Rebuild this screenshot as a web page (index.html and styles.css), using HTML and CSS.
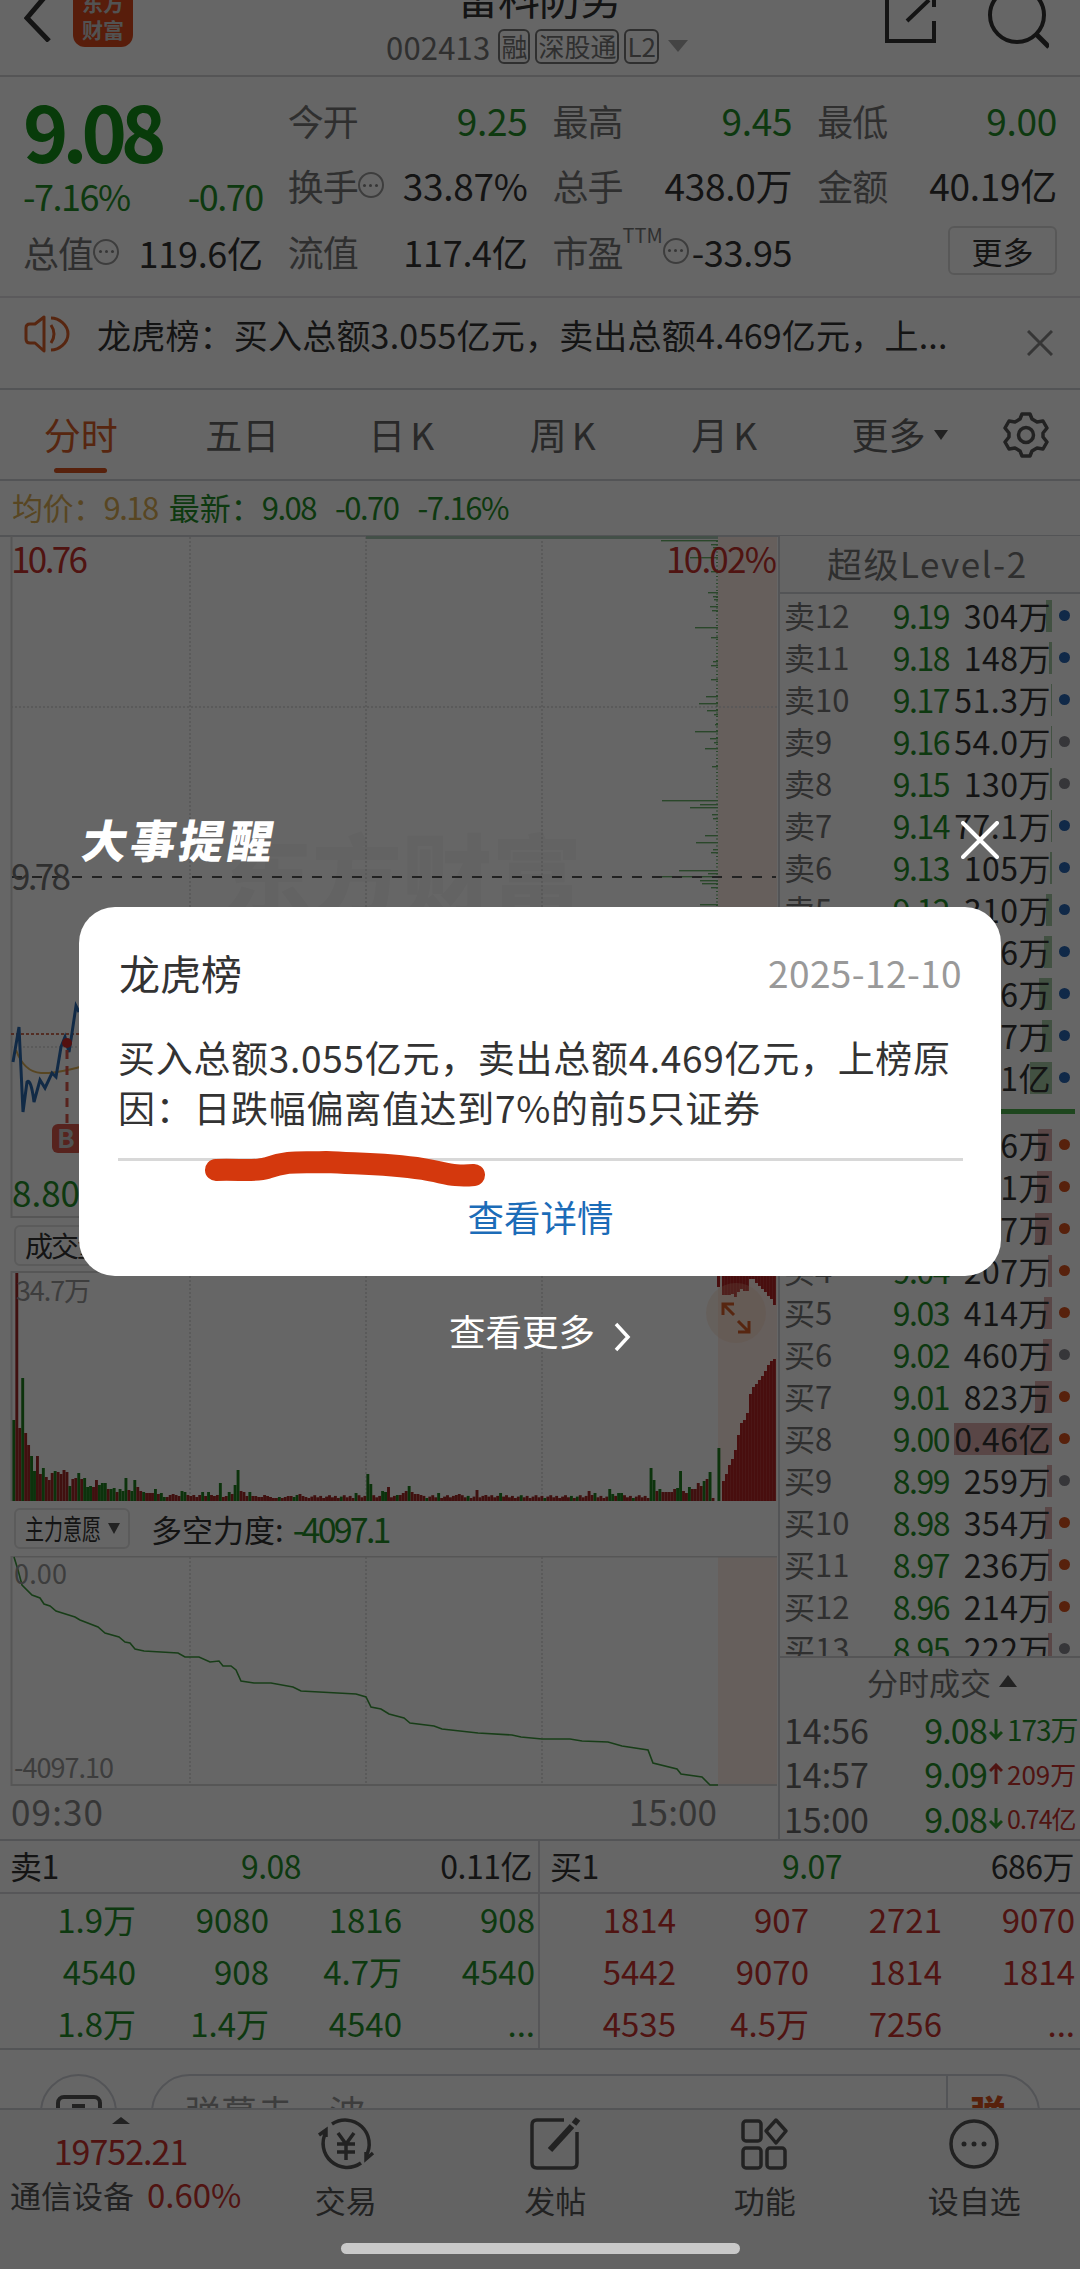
FILE: index.html
```html
<!DOCTYPE html>
<html lang="zh-CN">
<head>
  <meta charset="UTF-8" />
  <title>002413 分时</title>
  <meta name="viewport" content="width=device-width, initial-scale=1.0"/>
  <link rel="stylesheet" href="styles.css">
</head>
<body>

<div class="page">
  <header class="header">
    <svg class="back" width="28" height="84" viewBox="0 0 28 84"><path d="M25 34L3 60l22 23" fill="none" stroke="#333" stroke-width="5"/></svg>
    <div class="logo"><span>东方</span><span>财富</span></div>
    <div class="title">
      <h1>雷科防务</h1>
      <div class="code">
        <span class="num">002413</span>
        <span class="tag">融</span><span class="tag">深股通</span><span class="tag">L2</span>
        <svg width="20" height="12" viewBox="0 0 20 12"><path d="M0 0h20L10 12z" fill="#aaa"/></svg>
      </div>
    </div>
    <svg class="head-icons" width="170" height="60" viewBox="0 0 170 60" fill="none" stroke="#333" stroke-width="4">
      <path d="M8 0v41h47V21M50 0L28 21"/>
      <path d="M55 0v7"/>
      <circle cx="138" cy="15" r="27"/>
      <path d="M157 34l13 13" stroke-width="5"/>
    </svg>
  </header>

  <section class="stats">
    <div class="stat-price">
      <div class="price">9.08</div>
      <div class="cell green change"><b>-7.16%</b><b>-0.70</b></div>
      <div class="cell"><span>总值<i class="more-dot"></i></span><b>119.6亿</b></div>
    </div>
    <div class="stat-col">
      <div class="cell"><span>今开</span><b class="green">9.25</b></div>
      <div class="cell"><span>换手<i class="more-dot"></i></span><b>33.87%</b></div>
      <div class="cell"><span>流值</span><b>117.4亿</b></div>
    </div>
    <div class="stat-col">
      <div class="cell"><span>最高</span><b class="green">9.45</b></div>
      <div class="cell"><span>总手</span><b>438.0万</b></div>
      <div class="cell small"><span>市盈<sup>TTM</sup><i class="more-dot"></i></span><b>-33.95</b></div>
    </div>
    <div class="stat-col">
      <div class="cell"><span>最低</span><b class="green">9.00</b></div>
      <div class="cell"><span>金额</span><b>40.19亿</b></div>
      <div class="cell end"><button class="btn-more">更多</button></div>
    </div>
  </section>

  <section class="news">
    <svg width="48" height="40" viewBox="0 0 48 40" fill="none" stroke="#d9602a" stroke-width="3">
      <path d="M20 3v34l-9-8H6q-4 0-4-4V14q0-4 4-4h5z" stroke-linejoin="round"/>
      <path d="M27 11q6 9 0 18M27 4c8 0 17 7 17 16s-9 16-17 16" />
    </svg>
    <p>龙虎榜：买入总额3.055亿元，卖出总额4.469亿元，上...</p>
    <svg class="news-x" width="26" height="26" viewBox="0 0 26 26" stroke="#888" stroke-width="3"><path d="M1 1l24 24M25 1L1 25"/></svg>
  </section>

  <nav class="tabs">
    <span class="tab active">分时</span>
    <span class="tab">五日</span>
    <span class="tab k">日K</span>
    <span class="tab k">周K</span>
    <span class="tab k">月K</span>
    <span class="tab wide">更多<svg width="14" height="10" viewBox="0 0 14 10"><path d="M0 0h14L7 10z" fill="#555"/></svg></span>
    <svg class="gear" width="48" height="48" viewBox="0 0 48 48" fill="none" stroke="#555" stroke-width="3.5" stroke-linejoin="round">
      <path d="M20 3h8l2 5 5 3 6-1 4 7-4 5v4l4 5-4 7-6-1-5 3-2 5h-8l-2-5-5-3-6 1-4-7 4-5v-4l-4-5 4-7 6 1 5-3z"/>
      <circle cx="24" cy="24" r="7.5"/>
    </svg>
  </nav>

  <div class="latest">
    <span class="avg">均价：<b>9.18</b></span>
    <span class="now">最新：<b>9.08</b></span>
    <b>-0.70</b>
    <b>-7.16%</b>
  </div>

  <main class="main">
    <div class="charts">
      <svg class="chart" width="778" height="686" viewBox="0 536 778 686">
        <text class="watermark" x="222" y="910">东方财富</text>
        <rect x="718" y="537" width="59" height="680" fill="#ffede6"/>
        <path class="frame" d="M11.5 536v681H777"/>
        <path class="grid" d="M190 537V1217M366 537V1217M542 537V1217M11 707H777M11 1047H777"/>
        <path d="M366 537.500H718" stroke="#a9c9b3" stroke-width="3"/>
        <g id="chips" fill="#69b269"></g>
        <path d="M12 877H776" stroke="#555" stroke-width="2" stroke-dasharray="10 10"/>
        <path d="M11 1034H777" stroke="#d07058" stroke-width="2" stroke-dasharray="3 2"/>
        <path d="M16 1050Q24 1072 41 1073T90 1064" fill="none" stroke="#dcae55" stroke-width="2"/>
        <path d="M13 1062l6-35 4 85 4-30q4-4 7 20l6-22 5 8 7-15 4 4 5-30 4-10 4 15 3-19 4-27 3 6" fill="none" stroke="#2b69b0" stroke-width="3"/>
        <path d="M67 1050v74" stroke="#d9574b" stroke-width="3" stroke-dasharray="9 7"/>
        <circle cx="67" cy="1043" r="5" fill="#d02a2a"/>
        <rect x="52" y="1124" width="32" height="29" rx="6" fill="#d9574b"/>
        <text x="57" y="1148" font-size="26" font-weight="700" fill="#ccc">B</text>
        <text x="11" y="573" class="red" font-size="35" textLength="77">10.76</text>
        <text x="666" y="573" class="red" font-size="35" textLength="111">10.02%</text>
        <text x="11" y="890" fill="#777" font-size="35" textLength="60">9.78</text>
        <text x="12" y="1207" class="green" font-size="35" textLength="68">8.80</text>
      </svg>

      <div class="indicator"><span class="pick"><span class="pick-vol">成交量</span></span></div>

      <svg class="chart" width="778" height="232" viewBox="0 1271 778 232">
        <rect x="718" y="1272" width="59" height="229" fill="#ffede6"/>
        <path class="frame" d="M777 1272H11.500V1501"/>
        <path class="grid" d="M190 1272V1501M366 1272V1501M542 1272V1501"/>
        <g id="volume"></g>
        <circle cx="736" cy="1313" r="30" fill="#f7c9a8" opacity=".28"/>
        <path d="M723 1315V1304H734M723 1304L734 1315M749 1321V1332H738M749 1332L738 1321" fill="none" stroke="#d9602a" stroke-width="3"/>
        <text x="16" y="1301" fill="#999" font-size="27" textLength="75">34.7万</text>
      </svg>

      <div class="indicator">
        <span class="pick"><span class="pick-main">主力意愿</span><svg width="12" height="11" viewBox="0 0 12 11"><path d="M0 0h12L6 11z" fill="#555"/></svg></span>
        <span class="force">多空力度:</span><span class="force-num">-4097.1</span>
      </div>

      <svg class="chart" width="778" height="284" viewBox="0 1556 778 284">
        <rect x="718" y="1557" width="59" height="228" fill="#ffede6"/>
        <path class="frame" d="M777 1556.500H11.500V1785H777"/>
        <path class="grid" d="M190 1557V1785M366 1557V1785M542 1557V1785"/>
        <polyline fill="none" stroke="#3c9a3c" stroke-width="1.600" points="14,1557 18,1570 22,1585 32,1595 40,1598 44,1604 50,1606 56,1611 75,1617 80,1620 98,1627 105,1633 119,1637 125,1642 130,1643 135,1649 144,1651 178,1653 185,1657 199,1657 210,1662 219,1661 223,1666 231,1666 236,1670 241,1681 254,1683 271,1683 293,1687 301,1691 356,1694 366,1697 371,1707 381,1709 389,1714 404,1718 410,1723 434,1726 442,1729 478,1733 512,1735 521,1737 542,1739 570,1739 582,1741 608,1742 622,1746 648,1750 653,1763 677,1769 681,1774 702,1777 710,1785 718,1785"/>
        <text x="14" y="1584" fill="#999" font-size="27" textLength="53">0.00</text>
        <text x="14" y="1778" fill="#999" font-size="27" textLength="100">-4097.10</text>
        <text x="11" y="1826" fill="#888" font-size="35" textLength="92">09:30</text>
        <text x="629" y="1826" fill="#888" font-size="35" textLength="88">15:00</text>
      </svg>
    </div>

    <aside class="depth">
      <div class="depth-head">超级Level-2</div>
      <div class="book">
        <div class="rows" id="sells"></div>
        <div class="book-line"></div>
        <div class="rows" id="buys"></div>
      </div>
      <div class="deals-head">分时成交<svg width="18" height="12" viewBox="0 0 18 12"><path d="M0 12h18L9 0z" fill="#555"/></svg></div>
      <div class="deal"><span>14:56</span><b>9.08</b><svg class="down" viewBox="0 0 14 22"><path d="M7 1v19M1 14l6 6 6-6"/></svg><em class="green">173万</em></div>
      <div class="deal"><span>14:57</span><b>9.09</b><svg class="up" viewBox="0 0 14 22"><path d="M7 21V2M1 8l6-6 6 6"/></svg><em class="red mid">209万</em></div>
      <div class="deal"><span>15:00</span><b>9.08</b><svg class="down" viewBox="0 0 14 22"><path d="M7 1v19M1 14l6 6 6-6"/></svg><em class="red min">0.74亿</em></div>
    </aside>
  </main>

  <section class="queue">
    <div class="side">
      <div class="side-head"><span>卖1</span><span class="green">9.08</span><span>0.11亿</span></div>
      <div class="orders green">
        <span>1.9万</span><span>9080</span><span>1816</span><span>908</span>
        <span>4540</span><span>908</span><span>4.7万</span><span>4540</span>
        <span>1.8万</span><span>1.4万</span><span>4540</span><span>...</span>
      </div>
    </div>
    <div class="side">
      <div class="side-head"><span>买1</span><span class="green">9.07</span><span>686万</span></div>
      <div class="orders red">
        <span>1814</span><span>907</span><span>2721</span><span>9070</span>
        <span>5442</span><span>9070</span><span>1814</span><span>1814</span>
        <span>4535</span><span>4.5万</span><span>7256</span><span>...</span>
      </div>
    </div>
  </section>

  <section class="danmu">
    <div class="round">
      <svg width="46" height="40" viewBox="0 0 46 40" fill="none" stroke="#555" stroke-width="4"><rect x="2" y="2" width="42" height="34" rx="6"/><path d="M16 11h13"/></svg>
    </div>
    <div class="pill"><span>弹幕走一波</span><b>弹</b></div>
  </section>

  <footer class="bottom">
    <div class="index">
      <svg width="18" height="7" viewBox="0 0 18 7"><path d="M0 7h18L9 0z" fill="#555"/></svg>
      <div class="index-num">19752.21</div>
      <div class="index-name">通信设备<b>0.60%</b></div>
    </div>
    <div class="nav-item">
      <svg width="58" height="54" viewBox="0 0 58 54">
        <path d="M15 7A24 24 0 0 1 49 39M44 46A24 24 0 0 1 9 15M2 18l7-5v7M56 36l-7 6v-7"/>
        <path d="M21 16l8 11 8-11M29 27v16M20 27h18M20 35h18"/>
      </svg>
      <span>交易</span>
    </div>
    <div class="nav-item">
      <svg width="58" height="54" viewBox="0 0 58 54">
        <path d="M38 3H11q-5 0-5 5v38q0 5 5 5h35q5 0 5-5V15"/>
        <path d="M46 9L24 33" stroke-width="6"/><path d="M48 7l4-5" stroke-width="6"/>
      </svg>
      <span>发帖</span>
    </div>
    <div class="nav-item">
      <svg width="58" height="54" viewBox="0 0 58 54">
        <rect x="7" y="4" width="18" height="20" rx="3"/><rect x="7" y="31" width="18" height="20" rx="3"/><rect x="31" y="31" width="18" height="20" rx="3"/>
        <path d="M40 3l10 11-10 12-10-12z" stroke-linejoin="round"/>
      </svg>
      <span>功能</span>
    </div>
    <div class="nav-item">
      <svg width="58" height="54" viewBox="0 0 58 54">
        <circle cx="29" cy="27" r="23"/>
        <g fill="#555" stroke="none"><circle cx="19" cy="27" r="2.500"/><circle cx="29" cy="27" r="2.500"/><circle cx="39" cy="27" r="2.500"/></g>
      </svg>
      <span>设自选</span>
    </div>
  </footer>
</div>

<div class="mask">
  <div class="remind">
    <div class="remind-top">
      <h2>大事提醒</h2>
      <svg width="38" height="38" viewBox="0 0 38 38" stroke="#fff" stroke-width="4" stroke-linecap="round"><path d="M2 2l34 34M36 2L2 36"/></svg>
    </div>
    <div class="card">
      <div class="card-head"><h3>龙虎榜</h3><time>2025-12-10</time></div>
      <p>买入总额3.055亿元，卖出总额4.469亿元，上榜原<br>因：日跌幅偏离值达到7%的前5只证券</p>
      <a class="detail">查看详情</a>
      <svg class="stroke" width="290" height="44" viewBox="0 0 290 44"><path d="M15 24C38 23 54 26 66 22C88 14 100 17 125 16C160 18 185 17 222 23C246 27 252 31 273 29" fill="none" stroke="#d4380d" stroke-width="22" stroke-linecap="round" stroke-linejoin="round"/></svg>
    </div>
    <a class="see-more">查看更多<svg width="18" height="30" viewBox="0 0 18 30"><path d="M3 2l12 13L3 28" fill="none" stroke="#fff" stroke-width="3.500"/></svg></a>
  </div>
  <div class="home-bar"></div>
</div>

<script src="script.js"></script>
</body>
</html>
```
FILE: styles.css
```css
* {
  box-sizing: border-box;
}

body {
  margin: 0;
  width: 1080px;
  height: 2269px;
  overflow: hidden;
  background-color: #fff;
  color: #333;
  font-family: "Noto Sans CJK SC", sans-serif;
  font-size: 34px;
}

svg {
  display: block;
  flex: none;
}

h1, h2, h3, p {
  margin: 0;
  font-weight: 400;
}

b, em, i {
  font-weight: 400;
  font-style: normal;
}

.green {
  color: #25902a;
  fill: #25902a;
}

.red {
  color: #c8322d;
  fill: #c8322d;
}

.page {
  width: 1080px;
  height: 2269px;
  display: flex;
  flex-direction: column;
  overflow: hidden;
}

/* header */
.header {
  flex: none;
  height: 77px;
  display: flex;
  align-items: flex-start;
  padding-left: 24px;
  border-bottom: 2px solid #d5d5d8;
}

.back {
  margin-top: -42px;
}

.logo {
  margin: -11px 0 0 21px;
  width: 60px;
  height: 58px;
  border-radius: 12px;
  background-color: #dc4a1d;
  color: #ccc;
  font-size: 21px;
  font-weight: 700;
  line-height: 27px;
  display: flex;
  flex-direction: column;
  align-items: center;
}

.title {
  width: 494px;
  margin-left: 157px;
  display: flex;
  flex-direction: column;
  align-items: center;
}

.title h1 {
  margin-top: -31px;
  height: 58px;
  font-size: 42px;
  line-height: 56px;
  letter-spacing: -1px;
  width: 240px;
  padding-left: 40px;
  white-space: nowrap;
}

.code {
  display: flex;
  align-items: center;
  height: 38px;
  gap: 5px;
  color: #777;
  font-size: 31px;
}

.num {
  margin-right: 3px;
  letter-spacing: 0.2px;
}

.tag {
  height: 35px;
  padding: 0 1px;
  border: 2px solid #777;
  border-radius: 6px;
  font-size: 26px;
  line-height: 30px;
}

.code svg {
  margin-left: 4px;
}

.head-icons {
  margin-left: auto;
  margin-right: 31px;
}

/* quote figures */
.stats {
  flex: none;
  height: 221px;
  padding: 10px 23px 0 23px;
  display: flex;
  gap: 25px;
  border-bottom: 2px solid #e4e1e6;
}

.stat-col, .stat-price {
  width: 240px;
}

.cell {
  height: 65.500px;
  display: flex;
  align-items: center;
  justify-content: space-between;
  font-size: 36px;
  letter-spacing: -1px;
  white-space: nowrap;
}

.cell span {
  color: #777;
  display: flex;
  align-items: center;
}

.cell b {
  font-size: 37px;
  letter-spacing: -0.3px;
}

.stat-price .change {
  height: 44px;
  margin-top: 9px;
}

.change b {
  font-size: 36px;
  letter-spacing: -1.5px;
}

.stat-price .cell:last-child {
  margin-top: 2px;
}

.cell:last-child b {
  font-size: 36px;
}

.price {
  height: 77px;
  font-size: 77px;
  line-height: 86px;
  font-weight: 700;
  letter-spacing: -6px;
  color: #149419;
}

.cell sup {
  align-self: flex-start;
  font-size: 20px;
  line-height: 20px;
  letter-spacing: 0;
}

.small b {
  font-size: 34px;
}

.end {
  justify-content: flex-end;
}

.more-dot {
  width: 26px;
  height: 26px;
  border: 2px solid #999;
  border-radius: 50%;
  display: flex;
  align-items: center;
  justify-content: center;
}

.more-dot::before {
  content: "";
  width: 3px;
  height: 3px;
  border-radius: 50%;
  background-color: #888;
  box-shadow: -6px 0 #888, 6px 0 #888;
}

.btn-more {
  width: 109px;
  height: 49px;
  border: 2px solid #ddd;
  border-radius: 6px;
  background: none;
  color: #333;
  font-family: inherit;
  font-size: 31px;
  line-height: 40px;
}

/* news strip */
.news {
  flex: none;
  height: 92px;
  display: flex;
  align-items: flex-start;
  padding: 16px 27px 0 24px;
  border-bottom: 2px solid #d0d3d6;
}

.news p {
  margin-left: 25px;
  line-height: 42px;
  font-size: 34px;
  letter-spacing: 0.2px;
  white-space: nowrap;
}

.news-x {
  margin: 16px 0 0 auto;
}

/* chart tabs */
.tabs {
  flex: none;
  height: 91px;
  display: flex;
  align-items: center;
  color: #666;
  font-size: 37px;
  border-bottom: 2px solid #d0d3d6;
}

.tab {
  position: relative;
  width: 161.500px;
  line-height: 85px;
  text-align: center;
}

.tab.k {
  letter-spacing: 5px;
}

.tab.wide {
  display: flex;
  align-items: center;
  gap: 8px;
  width: 163px;
  padding-left: 44px;
  white-space: nowrap;
}

.active {
  color: #d9602a;
}

.active::after {
  content: "";
  position: absolute;
  left: 54px;
  bottom: 4px;
  width: 53px;
  height: 5px;
  border-radius: 3px;
  background-color: #d9541e;
}

.gear {
  margin-left: 31px;
}

.latest {
  flex: none;
  height: 56px;
  padding-left: 12px;
  display: flex;
  gap: 19px;
  font-size: 31px;
  line-height: 52px;
  color: #25902a;
  border-bottom: 2px solid #d0d3d6;
}

.latest b {
  letter-spacing: -1.5px;
}

.latest .avg {
  color: #dcae55;
  letter-spacing: -0.5px;
}

.now {
  margin-left: -8px;
}

/* charts */
.main {
  flex: none;
  height: 1305px;
  display: flex;
  margin-top: -1px;
  border-bottom: 2px solid #d0d3d6;
}

.charts {
  width: 778px;
}

.watermark {
  font-size: 90px;
  font-weight: 900;
  fill: #f7f7f7;
}

.frame {
  fill: none;
  stroke: #d8d8d8;
  stroke-width: 2;
}

.grid {
  stroke: #d8d8d8;
  stroke-width: 1.500;
  stroke-dasharray: 2 2;
}

.indicator {
  display: flex;
  align-items: center;
  height: 49px;
  padding: 0 0 3px 14px;
}

.charts .indicator:nth-of-type(2) {
  height: 53px;
}

.pick {
  width: 116px;
  height: 41px;
  padding-left: 9px;
  border: 2px solid #e4e4e4;
  border-radius: 6px;
  display: flex;
  align-items: center;
}

.pick svg {
  margin-left: -17px;
}

.pick-vol {
  font-size: 28px;
  letter-spacing: -2px;
  white-space: nowrap;
}

.pick-main {
  flex: none;
  width: 100px;
  font-size: 28px;
  line-height: 36px;
  transform: scaleX(0.68);
  transform-origin: left;
  white-space: nowrap;
}

.force {
  margin-left: 21px;
  font-size: 31px;
}

.force-num {
  margin-left: 9px;
  color: #25902a;
  letter-spacing: -2.800px;
}

/* order book */
.depth {
  width: 302px;
  border-left: 2px solid #d0d3d6;
}

.depth-head {
  height: 58px;
  background-color: #fafafa;
  border-bottom: 2px solid #d0d3d6;
  padding-left: 47px;
  color: #777;
  font-size: 35px;
  line-height: 54px;
  letter-spacing: 1.500px;
  white-space: nowrap;
}

.book {
  height: 1064px;
  padding-top: 1px;
  overflow: hidden;
  border-bottom: 2px solid #d5d5d8;
}

.book-line {
  height: 5px;
  margin: 10px 5px 10px 4px;
  background-color: #4db04d;
}

.row {
  display: grid;
  grid-template-columns: 70px 95px 103px;
  align-items: center;
  height: 42px;
  padding-left: 4px;
  font-size: 32px;
  line-height: 40px;
  text-align: right;
  white-space: nowrap;
}

.row .name {
  height: 42px;
  color: #777;
  font-size: 31px;
  text-align: left;
}

.row .cost {
  height: 42px;
  color: #25902a;
  letter-spacing: -1.500px;
}

.row .qty {
  position: relative;
  height: 42px;
  letter-spacing: 0.500px;
}

.qty::after {
  content: "";
  position: absolute;
  right: -18px;
  top: 15px;
  width: 11px;
  height: 11px;
  border-radius: 50%;
  background-color: #888890;
}

.qty.blue::after {
  background-color: #2a66b4;
}

.qty.orange::after {
  background-color: #d9541e;
}

.bar {
  position: absolute;
  right: 0;
  top: 5px;
  height: 32px;
  background-color: #a5cba5;
}

.bar.buy {
  background-color: #dfb0b0;
}

.qty span {
  position: relative;
  padding-right: 1px;
}

.deals-head {
  height: 46px;
  margin-bottom: 3px;
  padding-left: 87px;
  display: flex;
  align-items: center;
  gap: 8px;
  color: #777;
  font-size: 31px;
}

.deal {
  height: 44.500px;
  padding-left: 4px;
  display: grid;
  grid-template-columns: 100px 103px 20px 70px;
  align-items: center;
  line-height: 43px;
  color: #666;
}

.deal b {
  text-align: right;
  letter-spacing: -0.800px;
  color: #25902a;
}

.deal svg {
  width: 14px;
  height: 22px;
  margin-left: 2px;
  fill: none;
  stroke-width: 3;
}

.down {
  stroke: #30a030;
}

.up {
  stroke: #c8322d;
}

.deal em {
  font-size: 28px;
  letter-spacing: -1px;
  white-space: nowrap;
}

.deal .mid {
  font-size: 26px;
  letter-spacing: 0;
}

.deal .min {
  font-size: 25px;
}

/* order queue */
.queue {
  flex: none;
  display: flex;
  height: 209px;
  border-bottom: 2px solid #d0d3d6;
}

.side {
  width: 541px;
  padding-top: 1px;
}

.side:first-child {
  border-right: 2px solid #d8d8dc;
}

.side-head {
  height: 52px;
  padding: 0 6px 0 10px;
  display: grid;
  grid-template-columns: 1fr 1fr 1fr;
  line-height: 47px;
  font-size: 32px;
  border-bottom: 2px solid #d8d8dc;
}

.side-head span {
  letter-spacing: -0.500px;
}

.side-head span:nth-child(2) {
  text-align: center;
}

.side-head span:last-child {
  text-align: right;
}

.orders {
  display: grid;
  grid-template-columns: repeat(4, 133px);
  padding-left: 3px;
  font-size: 33px;
  line-height: 52px;
  margin-top: -1px;
  text-align: right;
}

/* comment bar */
.danmu {
  flex: none;
  height: 58px;
  padding: 24px 0 0 40px;
  display: flex;
  align-items: flex-start;
  overflow: hidden;
}

.round {
  flex: none;
  width: 77px;
  height: 77px;
  padding: 19px 0 0 14px;
  border: 2px solid #d0d3da;
  border-radius: 50%;
}

.pill {
  width: 889px;
  height: 77px;
  margin-left: 34px;
  padding-left: 32px;
  display: flex;
  justify-content: space-between;
  border: 2px solid #d0d3da;
  border-radius: 39px;
  color: #999;
  font-size: 36px;
  line-height: 71px;
}

.pill b {
  width: 92px;
  padding-left: 22px;
  border-left: 2px solid #d0d3da;
  color: #d9541e;
  font-weight: 900;
}

/* bottom bar */
.bottom {
  flex: 1;
  display: flex;
  background-color: #f8f8f8;
  border-top: 2px solid #d0d3d6;
}

.index {
  width: 241px;
  padding-top: 7px;
  color: #555;
}

.index svg {
  margin-left: 112px;
}

.index-num {
  height: 50px;
  text-align: center;
  color: #c8322d;
  font-size: 34px;
  line-height: 54px;
  letter-spacing: -1px;
}

.index-name {
  padding-left: 10px;
  font-size: 31px;
  line-height: 40px;
  white-space: nowrap;
}

.index-name b {
  margin-left: 13px;
  font-size: 33px;
  color: #c8322d;
}

.nav-item {
  width: 209.500px;
  padding-top: 7px;
  display: flex;
  flex-direction: column;
  align-items: center;
  color: #555;
  font-size: 31px;
  line-height: 57px;
}

.nav-item svg {
  fill: none;
  stroke: #555;
  stroke-width: 3.500;
}

/* reminder dialog */
.mask {
  position: absolute;
  left: 0;
  top: 0;
  width: 1080px;
  height: 2269px;
  background-color: rgba(0, 0, 0, 0.6);
  display: flex;
  flex-direction: column;
  align-items: center;
}

.remind {
  width: 922px;
  padding-top: 815px;
}

.remind-top {
  height: 92px;
  padding: 6px 2px 0 0;
  display: flex;
  justify-content: space-between;
}

.remind-top h2 {
  margin-top: -4px;
  color: #fff;
  font-size: 45px;
  font-weight: 900;
  line-height: 44px;
  letter-spacing: 3.500px;
  transform: skewX(-10deg);
}

.card {
  position: relative;
  height: 369px;
  padding: 37px 38px 0 39px;
  border-radius: 36px;
  background-color: #fff;
}

.card-head {
  display: flex;
  justify-content: space-between;
  line-height: 56px;
  padding: 0 1px;
}

.card h3 {
  font-size: 41px;
}

.card time {
  color: #999;
  font-size: 37px;
  letter-spacing: 0.400px;
}

.card p {
  height: 124px;
  margin-top: 32px;
  font-size: 37px;
  line-height: 50px;
  letter-spacing: 0.700px;
  white-space: nowrap;
}

.detail {
  display: block;
  margin-top: 2px;
  border-top: 3px solid #d8d8d8;
  color: #1c6cb8;
  font-size: 36.500px;
  line-height: 112px;
  text-align: center;
}

.stroke {
  position: absolute;
  left: 122px;
  top: 239px;
}

.see-more {
  margin-top: 26px;
  display: flex;
  align-items: center;
  justify-content: center;
  gap: 18px;
  color: #fff;
  font-size: 36.500px;
  line-height: 58px;
}

.see-more svg {
  margin-top: 11px;
}

.home-bar {
  width: 399px;
  height: 11px;
  margin-top: auto;
  margin-bottom: 15px;
  border-radius: 6px;
  background-color: #c9c9c9;
}
```
FILE: script.js
```js
const NS = "http://www.w3.org/2000/svg";

function addRect(group, x, y, w, h, color) {
  const rect = document.createElementNS(NS, "rect");
  rect.setAttribute("x", x);
  rect.setAttribute("y", y);
  rect.setAttribute("width", w);
  rect.setAttribute("height", h);
  if (color) rect.setAttribute("fill", color);
  group.appendChild(rect);
}

// [name, price, quantity, bar width, dot]
const sells = [
  ["卖12", "9.19", "304万", 6, "blue"],
  ["卖11", "9.18", "148万", 3, "blue"],
  ["卖10", "9.17", "51.3万", 1, "blue"],
  ["卖9", "9.16", "54.0万", 1, ""],
  ["卖8", "9.15", "130万", 2, ""],
  ["卖7", "9.14", "77.1万", 1, "blue"],
  ["卖6", "9.13", "105万", 2, "blue"],
  ["卖5", "9.12", "310万", 6, "blue"],
  ["卖4", "9.11", "776万", 8, "blue"],
  ["卖3", "9.10", "636万", 13, "blue"],
  ["卖2", "9.09", "507万", 10, "blue"],
  ["卖1", "9.08", "0.11亿", 22, "blue"]
];

const buys = [
  ["买1", "9.07", "686万", 14, "orange"],
  ["买2", "9.06", "721万", 15, "orange"],
  ["买3", "9.05", "827万", 17, "orange"],
  ["买4", "9.04", "207万", 4, "orange"],
  ["买5", "9.03", "414万", 8, "orange"],
  ["买6", "9.02", "460万", 9, ""],
  ["买7", "9.01", "823万", 17, "orange"],
  ["买8", "9.00", "0.46亿", 98, "orange"],
  ["买9", "8.99", "259万", 5, ""],
  ["买10", "8.98", "354万", 7, "orange"],
  ["买11", "8.97", "236万", 4, "orange"],
  ["买12", "8.96", "214万", 4, "orange"],
  ["买13", "8.95", "222万", 4, ""]
];

function renderRows(id, rows, side) {
  document.getElementById(id).innerHTML = rows.map(([name, cost, qty, width, dot]) => `
    <div class="row">
      <span class="name">${name}</span>
      <span class="cost">${cost}</span>
      <span class="qty ${dot}"><i class="bar ${side}" style="width:${width}px"></i><span>${qty}</span></span>
    </div>`).join("");
}

renderRows("sells", sells, "sell");
renderRows("buys", buys, "buy");

// price distribution, [y, length], hanging off the close line
const chips = [
  [540, 57], [544, 7], [547, 5], [557, 28], [571, 7], [592, 10], [596, 5], [599, 4], [606, 8], [610, 6],
  [627, 23], [637, 7], [661, 5], [665, 7], [679, 7], [696, 12], [703, 19], [710, 11], [714, 4], [724, 3],
  [731, 23], [738, 8], [742, 4], [748, 13], [766, 6], [800, 56], [804, 18], [807, 28], [814, 6], [818, 5],
  [835, 13], [842, 22], [849, 5], [852, 7], [870, 39], [873, 10], [876, 58], [880, 18], [883, 16], [887, 7], [904, 18]
];
const chipGroup = document.getElementById("chips");
for (let y = 541; y < 907; y += 3.5) addRect(chipGroup, 716, y, 2, 1);
chips.forEach(([y, len]) => addRect(chipGroup, 718 - len, y, len, 1.4));

// minute volume, bar heights in px
const volume = [
  81, 228, 73, 123, 68, 56, 45, 30, 45, 27, 33, 24, 21, 28, 30, 29, 27, 31, 29, 15,
  22, 23, 28, 22, 23, 14, 15, 14, 21, 16, 18, 18, 12, 12, 13, 9, 12, 10, 23, 11,
  10, 21, 14, 10, 9, 8, 8, 8, 12, 7, 8, 4, 4, 6, 7, 6, 5, 10, 9, 6,
  5, 6, 4, 6, 9, 5, 9, 6, 5, 6, 18, 4, 5, 9, 7, 16, 31, 10, 9, 5,
  9, 5, 5, 4, 4, 6, 5, 4, 3, 3, 4, 3, 4, 5, 5, 4, 6, 7, 5, 4
];
while (volume.length < 240) volume.push(3 + (volume.length * 7 % 5) * 0.7);
const spikes = {
  116: 8, 120: 27, 121: 17, 125: 10, 126: 9, 127: 14, 130: 6, 131: 6, 132: 8, 133: 10, 134: 15, 135: 9, 136: 7, 137: 7, 138: 6,
  144: 8, 150: 6, 151: 7, 157: 11, 160: 6, 165: 8, 195: 10, 196: 6, 197: 8, 202: 12, 203: 7, 205: 8, 206: 8,
  216: 33, 217: 21, 218: 10, 219: 12, 220: 9, 221: 9, 222: 9, 223: 9, 224: 12, 225: 13, 226: 30, 227: 10, 228: 8,
  229: 14, 230: 12, 231: 12, 232: 18, 233: 15, 234: 20, 235: 22, 236: 29, 237: 3, 238: 0, 239: 53
};
Object.keys(spikes).forEach((i) => { volume[i] = spikes[i]; });
const greens = [
  0, 3, 6, 7, 10, 14, 19, 22, 24, 25, 26, 29, 30, 31, 33, 34, 36, 37, 38, 40, 41, 44, 48, 50, 51, 57, 58, 64, 66, 70,
  73, 75, 76, 80, 90, 95, 96, 111, 116, 120, 121, 125, 126, 130, 134, 140, 144, 154, 165, 172, 180, 189, 191,
  197, 202, 203, 205, 206, 210, 216, 217, 219, 225, 226, 229, 234, 236, 239
];

const volumeGroup = document.getElementById("volume");
volume.forEach((h, i) => {
  addRect(volumeGroup, 12.4 + i * 2.95, 1501 - h, 2.9, h, greens.includes(i) ? "#20801f" : "#a02a26");
});

// closing auction: matched volume below, unmatched above
const matched = [20, 27, 36, 42, 51, 66, 78, 81, 88, 107, 114, 117, 121, 125, 130, 136, 140, 142];
const unmatched = [23, 23, 23, 22, 25, 20, 17, 19, 19, 7, 7, 11, 14, 17, 20, 24, 27, 33];
addRect(volumeGroup, 717, 1272, 3, 15, "#b52424");
matched.forEach((h, i) => addRect(volumeGroup, 722 + i * 3, 1501 - h, 2.9, h, "#b52424"));
unmatched.forEach((h, i) => addRect(volumeGroup, 722 + i * 3, 1272, 2.9, h, "#b52424"));
```
